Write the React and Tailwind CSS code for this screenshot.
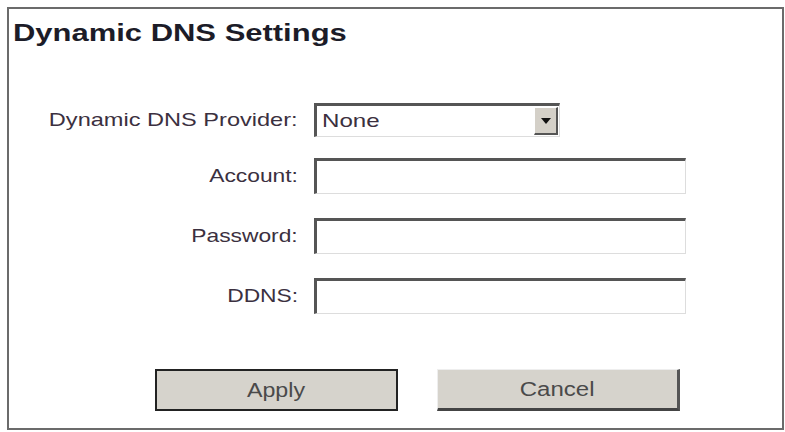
export default function App() {
  const rows = [
    { label: "Account:", top: "mt-[21px]" },
    { label: "Password:", top: "mt-6" },
    { label: "DDNS:", top: "mt-6" },
  ];

  return (
    <div className="w-[785px] h-[432px] bg-white pt-[7px] pl-[7px] font-['Liberation_Sans',Arial,sans-serif]">
      <div className="w-[777px] h-[423px] border-2 border-[#6b6b6b] bg-white">
        <h1 className="pl-[4px] pt-[9px] text-[24px] leading-[30px] font-bold text-[#1c1c28]">
          <span className="inline-block origin-left scale-x-[1.29]">Dynamic DNS Settings</span>
        </h1>

        <div className="mt-[55px] flex items-center">
          <label className="w-[290px] text-right text-[19px] text-[#3b3040] pr-[1px]">
            <span className="inline-block origin-right scale-x-[1.24]">Dynamic DNS Provider:</span>
          </label>
          <div className="ml-[15px] flex h-[34px] w-[246px] border-t-[3px] border-l-[3px] border-b border-r border-t-[#555] border-l-[#555] border-b-[#ddd] border-r-[#ddd] bg-white">
            <span className="flex-1 pl-[5px] text-[19px] leading-[30px] text-[#3b3040]">
              <span className="inline-block origin-left scale-x-[1.27]">None</span>
            </span>
            <div className="my-[1px] mr-[1px] flex w-[24px] items-center justify-center border-r-2 border-b-2 border-t border-l border-r-[#555] border-b-[#555] border-t-white border-l-white bg-[#d4d0c8]">
              <svg width="10" height="6" viewBox="0 0 10 6">
                <path d="M0 0h10L5 6z" fill="#111" />
              </svg>
            </div>
          </div>
        </div>

        {rows.map((r) => (
          <div key={r.label} className={`${r.top} flex items-center`}>
            <label className="w-[290px] text-right text-[19px] text-[#3b3040] pr-[1px]">
              <span className="inline-block origin-right scale-x-[1.2]">{r.label}</span>
            </label>
            <div className="ml-[15px] h-[36px] w-[372px] border-t-[3px] border-l-[3px] border-b border-r border-t-[#555] border-l-[#555] border-b-[#ddd] border-r-[#ddd] bg-white" />
          </div>
        ))}

        <div className="mt-[55px] flex gap-[39px] pl-[146px]">
          <button className="h-[42px] w-[243px] border-2 border-[#222] bg-[#d6d3cc] text-[20px] text-[#4a4a4a]">
            <span className="inline-block scale-x-[1.16]">Apply</span>
          </button>
          <button className="h-[42px] w-[243px] border-t border-l border-r-[3px] border-b-[3px] border-t-[#eee] border-l-[#eee] border-r-[#555] border-b-[#444] bg-[#d6d3cc] text-[20px] text-[#4a4a4a]">
            <span className="inline-block scale-x-[1.2]">Cancel</span>
          </button>
        </div>
      </div>
    </div>
  );
}
